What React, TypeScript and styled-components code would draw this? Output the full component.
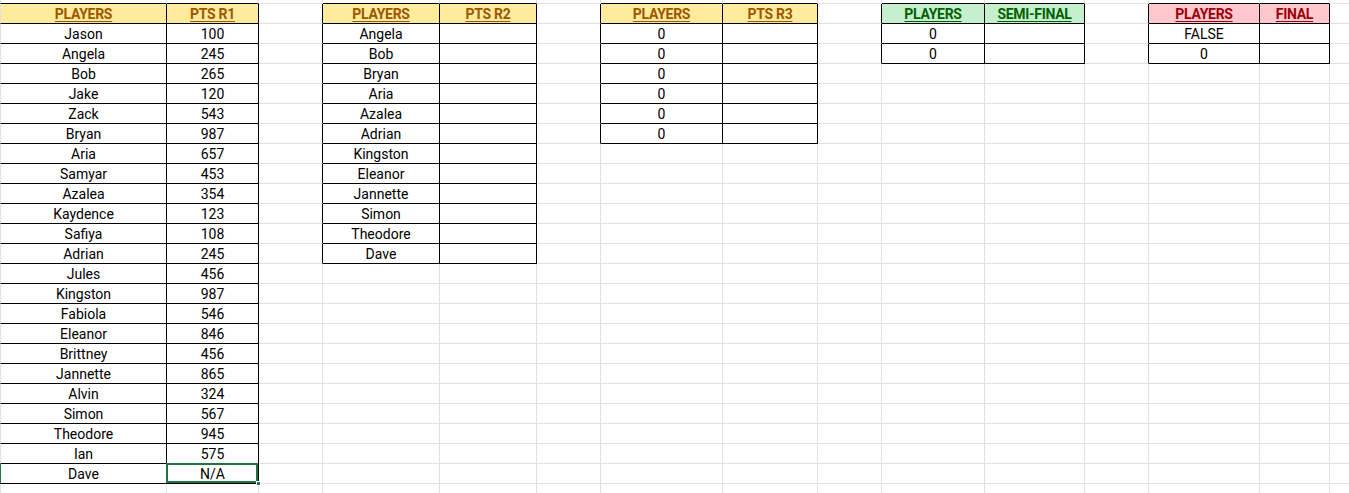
import React from 'react';
import styled, { createGlobalStyle, css } from 'styled-components';

const GRID = '#e1e1e1';
const SEL = '#217346';
const COLS = [167, 92, 64, 117, 97, 64, 122, 95, 64, 103, 100, 64, 111, 70, 64];
const ROW_COUNT = 26; // row 0 is the 4px strip at the top

type Tone = 'neutral' | 'good' | 'bad';
const TONES: Record<Tone, { bg: string; fg: string }> = {
  neutral: { bg: '#ffeb9c', fg: '#9c5700' },
  good: { bg: '#c6efce', fg: '#006100' },
  bad: { bg: '#ffc7ce', fg: '#9c0006' },
};

interface Table {
  col: number;
  tone: Tone;
  headers: [string, string];
  rows: [string, string][];
}

const r1: [string, string][] = [
  ['Jason', '100'], ['Angela', '245'], ['Bob', '265'], ['Jake', '120'], ['Zack', '543'],
  ['Bryan', '987'], ['Aria', '657'], ['Samyar', '453'], ['Azalea', '354'], ['Kaydence', '123'],
  ['Safiya', '108'], ['Adrian', '245'], ['Jules', '456'], ['Kingston', '987'], ['Fabiola', '546'],
  ['Eleanor', '846'], ['Brittney', '456'], ['Jannette', '865'], ['Alvin', '324'], ['Simon', '567'],
  ['Theodore', '945'], ['Ian', '575'], ['Dave', 'N/A'],
];
const r2names = ['Angela', 'Bob', 'Bryan', 'Aria', 'Azalea', 'Adrian', 'Kingston', 'Eleanor', 'Jannette', 'Simon', 'Theodore', 'Dave'];

const TABLES: Table[] = [
  { col: 0, tone: 'neutral', headers: ['PLAYERS', 'PTS R1'], rows: r1 },
  { col: 3, tone: 'neutral', headers: ['PLAYERS', 'PTS R2'], rows: r2names.map((n) => [n, ''] as [string, string]) },
  { col: 6, tone: 'neutral', headers: ['PLAYERS', 'PTS R3'], rows: Array.from({ length: 6 }, () => ['0', ''] as [string, string]) },
  { col: 9, tone: 'good', headers: ['PLAYERS', 'SEMI-FINAL'], rows: [['0', ''], ['0', '']] },
  { col: 12, tone: 'bad', headers: ['PLAYERS', 'FINAL'], rows: [['FALSE', ''], ['0', '']] },
];

interface CellInfo {
  text: string;
  head?: boolean;
  tone?: Tone;
}

function lookup(r: number, c: number): CellInfo | null {
  for (const t of TABLES) {
    if (c < t.col || c > t.col + 1) continue;
    if (r === 1) return { text: t.headers[c - t.col], head: true, tone: t.tone };
    const i = r - 2;
    if (i >= 0 && i < t.rows.length) return { text: t.rows[i][c - t.col] };
  }
  return null;
}

const SELECTED = { r: 24, c: 1 };

const Global = createGlobalStyle`
  html, body { margin: 0; padding: 0; background: #fff; overflow: hidden; }
  body { font-family: "Roboto", "Liberation Sans", sans-serif; }
`;

const Viewport = styled.div`
  height: 493px;
  overflow: hidden;
`;

const Sheet = styled.div`
  display: grid;
  grid-template-columns: ${COLS.map((w) => `${w}px`).join(' ')};
  grid-template-rows: 4px repeat(${ROW_COUNT - 1}, 20px);
  width: max-content;
`;

const Cell = styled.div<{
  $br: boolean;
  $bb: boolean;
  $first: boolean;
  $mark: boolean;
  $tone?: Tone;
  $head?: boolean;
  $selected?: boolean;
}>`
  box-sizing: border-box;
  position: relative;
  display: flex;
  align-items: center;
  justify-content: center;
  padding-top: 1px;
  border-right: 1px solid ${(p) => (p.$br ? '#000' : GRID)};
  border-bottom: 1px solid ${(p) => (p.$bb ? '#000' : GRID)};
  ${(p) => p.$first && css`border-left: 1px solid ${p.$mark ? SEL : GRID};`}
  background: ${(p) => (p.$tone ? TONES[p.$tone].bg : '#fff')};
  color: ${(p) => (p.$tone ? TONES[p.$tone].fg : '#000')};
  font-size: 14px;
  font-weight: ${(p) => (p.$head ? 700 : 400)};
  letter-spacing: ${(p) => (p.$head ? '-0.3px' : '0')};
  text-decoration: ${(p) => (p.$head ? 'underline' : 'none')};
  text-underline-offset: 2px;
  white-space: nowrap;
  ${(p) =>
    p.$selected &&
    css`
      z-index: 2;
      &::after {
        content: '';
        position: absolute;
        left: -1px;
        top: -1px;
        right: 0;
        bottom: 0;
        border: 2px solid ${SEL};
        pointer-events: none;
      }
    `}
`;

const FillHandle = styled.span`
  position: absolute;
  right: -3px;
  bottom: -3px;
  width: 5px;
  height: 5px;
  background: ${SEL};
  box-sizing: border-box;
  border: 1px solid #fff;
  z-index: 3;
`;

export default function App() {
  const cells: React.ReactNode[] = [];
  for (let r = 0; r < ROW_COUNT; r++) {
    for (let c = 0; c < COLS.length; c++) {
      const info = lookup(r, c);
      const br = !!info || !!lookup(r, c + 1);
      const bb = !!info || !!lookup(r + 1, c);
      const selected = r === SELECTED.r && c === SELECTED.c;
      cells.push(
        <Cell
          key={`${r}-${c}`}
          $br={br}
          $bb={bb}
          $first={c === 0}
          $mark={c === 0 && r === SELECTED.r}
          $tone={info?.head ? info.tone : undefined}
          $head={info?.head}
          $selected={selected}
        >
          {info?.text}
          {selected && <FillHandle />}
        </Cell>
      );
    }
  }
  return (
    <>
      <Global />
      <Viewport>
        <Sheet>{cells}</Sheet>
      </Viewport>
    </>
  );
}
